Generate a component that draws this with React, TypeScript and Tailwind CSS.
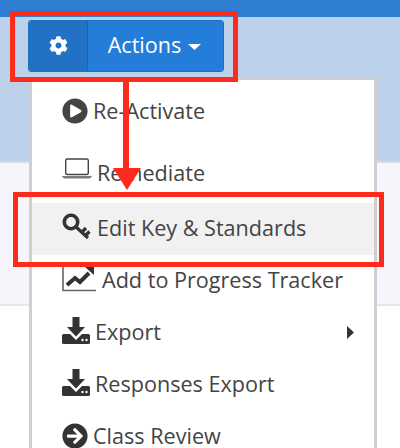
import { FaCog, FaPlayCircle, FaArrowCircleRight } from 'react-icons/fa';

function LaptopIcon() {
  return (
    <svg width="30" height="22" viewBox="0 0 30 22" className="-mt-[6px] text-[#444]">
      <rect x="3.700" y="1" width="22.600" height="15.500" rx="1.500" fill="none" stroke="currentColor" strokeWidth="1.400" />
      <path d="M0 18h30c-.6 1.600-1.600 2.400-3 2.400H3c-1.400 0-2.400-.8-3-2.400z" fill="currentColor" opacity="0.7" />
    </svg>
  );
}

function KeyIcon() {
  return (
    <svg width="29" height="28" viewBox="0 0 29 28" className="-mt-[5px] text-[#333]">
      <circle cx="9" cy="9" r="6.700" fill="none" stroke="currentColor" strokeWidth="3.600" />
      <path d="M13 13l13 12M20 19l4-4M24 22l3.500-3.500" fill="none" stroke="currentColor" strokeWidth="3.200" />
    </svg>
  );
}

function ChartIcon() {
  return (
    <svg width="34" height="28" viewBox="0 0 34 28" className="-mt-[6px] text-[#333]">
      <path d="M1 0v26.500h33" fill="none" stroke="#666" strokeWidth="1.600" />
      <path d="M5 21l8-7 5 4 9-9" fill="none" stroke="currentColor" strokeWidth="4" />
      <path d="M23 3h9v8z" fill="currentColor" />
    </svg>
  );
}

// tray with arrow, two little dots on the tray like the old font awesome download glyph
function DownloadIcon() {
  return (
    <svg width="28" height="27" viewBox="0 0 28 27" className="-mt-[6px] text-[#333]">
      <path d="M10.500 0h7v10h5.500L14 19.500 5 10h5.500z" fill="currentColor" />
      <path d="M1.500 17h6.500l6 6 6-6h6.500a1.500 1.500 0 0 1 1.500 1.500v7a1.500 1.500 0 0 1-1.500 1.500h-25A1.500 1.500 0 0 1 0 25.500v-7A1.500 1.500 0 0 1 1.500 17z" fill="currentColor" />
      <circle cx="20.500" cy="23" r="1.200" fill="#fff" />
      <circle cx="24.500" cy="23" r="1.200" fill="#fff" />
    </svg>
  );
}

function MenuRow({ icon, label, gap, height = 'h-[52px]', textClass = '-mt-[3px]', active, caret }: {
  icon: React.ReactNode; label: string; gap: string; height?: string; textClass?: string; active?: boolean; caret?: boolean;
}) {
  return (
    <div className={`flex items-center pl-[30px] pr-[20px] text-[21.6px] leading-[30px] text-[#444] ${height} ${gap} ${active ? 'bg-[#f1f1f1]' : ''}`}>
      <span className="flex shrink-0 items-center">{icon}</span>
      <span className={`flex-1 whitespace-nowrap ${textClass}`}>{label}</span>
      {caret && (
        <svg width="7" height="13" viewBox="0 0 7 13" className="-mt-[2px] text-[#333]">
          <path d="M0 0l7 6.500L0 13z" fill="currentColor" />
        </svg>
      )}
    </div>
  );
}

export default function App() {
  return (
    <div className="relative h-[448px] w-[400px] overflow-hidden bg-white font-['Open_Sans',sans-serif]">
      <div className="h-[17px] bg-[#2e7fd1]" />
      <div className="h-[146px] border-b-2 border-[#dcdcdc] bg-[#bcd2ea] pl-[28px] pt-[3px]">
        {/* actions button */}
        <div className="flex h-[52px] w-[196px] overflow-hidden rounded-[3px] border border-[#1f6fbe] text-white">
          <div className="flex w-[59px] items-center justify-center border-r border-[#1b65ad] bg-[#2172c4]">
            <FaCog size={19} className="-mt-[1px]" />
          </div>
          <div className="flex flex-1 items-center justify-center gap-[7px] bg-[#247dd8] pb-[1px] pr-[2px] text-[21.6px]">
            Actions
            <svg width="13" height="6" viewBox="0 0 13 6" className="mt-[3px]"><path d="M0 0h13L6.500 6z" fill="currentColor" /></svg>
          </div>
        </div>
      </div>
      <div className="h-[143px] border-b-2 border-[#e6e6e6] bg-[#f5f5fb]" />
      <div className="h-[142px] bg-white" />

      {/* dropdown */}
      <div className="absolute left-[29px] top-[77px] w-[348px] border-x-[3px] border-t-[3px] border-[#cfcfcf] bg-white pt-[2px]">
        <MenuRow icon={<FaPlayCircle size={26} className="text-[#444]" />} label="Re-Activate" gap="gap-[5px]" height="h-[58px]" textClass="-mt-[1px]" />
        <MenuRow icon={<LaptopIcon />} label="Remediate" gap="gap-[5px]" height="h-[63px]" textClass="mt-[2px]" />
        <MenuRow icon={<KeyIcon />} label="Edit Key & Standards" gap="gap-[6px]" active />
        <MenuRow icon={<ChartIcon />} label="Add to Progress Tracker" gap="gap-[6px]" />
        <MenuRow icon={<DownloadIcon />} label="Export" gap="gap-[5px]" caret />
        <MenuRow icon={<DownloadIcon />} label="Responses Export" gap="gap-[5px]" />
        <MenuRow icon={<FaArrowCircleRight size={26} className="-mt-[2px] text-[#333]" />} label="Class Review" gap="gap-[5px]" />
      </div>

      {/* annotation */}
      <div className="absolute left-[10px] top-[11px] h-[71px] w-[228px] border-[5px] border-[#fe2a1c]" />
      <div className="absolute left-[13px] top-[192px] h-[75px] w-[371px] border-[5px] border-[#fe2a1c]" />
      <div className="absolute left-[123px] top-[82px] h-[90px] w-[6px] bg-[#fe2a1c]" />
      <svg width="28" height="22" viewBox="0 0 28 22" className="absolute left-[113px] top-[168px]">
        <path d="M0 0h28L14 22z" fill="#fe2a1c" />
      </svg>
    </div>
  );
}
